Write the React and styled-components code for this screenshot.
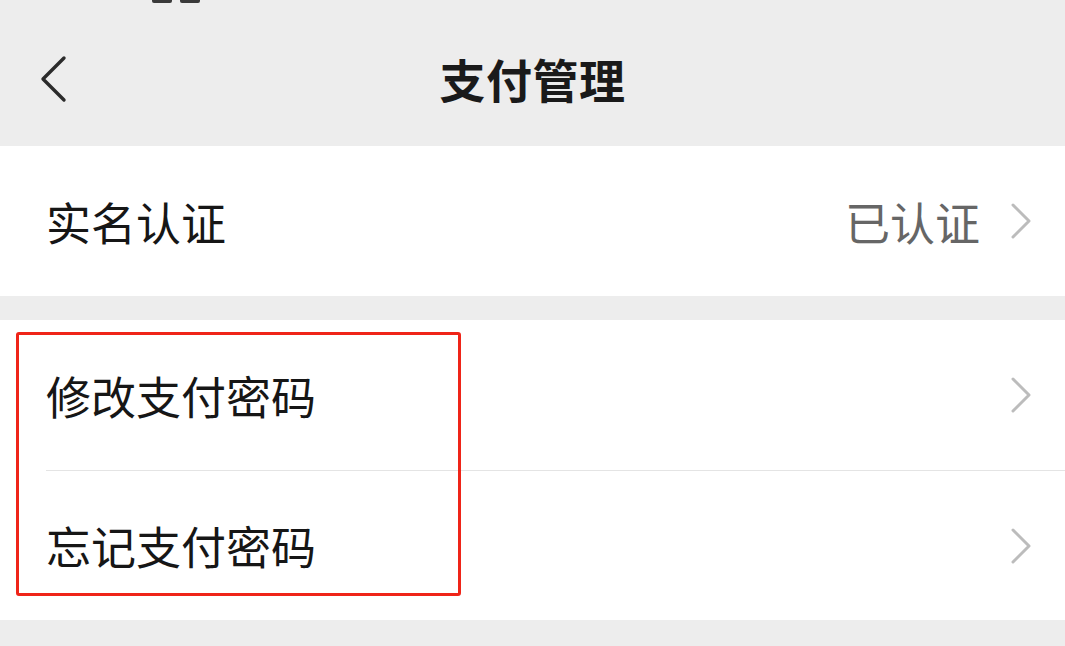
import React from "react";
import styled, { createGlobalStyle } from "styled-components";

const items = [
  { key: "edit", label: "修改支付密码" },
  { key: "forgot", label: "忘记支付密码" },
];

const Chevron = ({ dir = "right" }) =>
  dir === "left" ? (
    <svg width="30" height="48" viewBox="0 0 30 48" fill="none">
      <path d="M26 3 L5 24 L26 45" stroke="#2b2b2b" strokeWidth="3.4" strokeLinecap="round" strokeLinejoin="round" />
    </svg>
  ) : (
    <svg width="22" height="36" viewBox="0 0 22 36" fill="none">
      <path d="M3 2 L19 18 L3 34" stroke="#bcbcbc" strokeWidth="3" strokeLinecap="round" strokeLinejoin="round" />
    </svg>
  );

export default function App() {
  return (
    <>
      <GlobalStyle />
      <Page>
        <StatusSliver>
          <span />
          <span />
        </StatusSliver>
        <NavBar>
          <BackButton>
            <Chevron dir="left" />
          </BackButton>
          <Title>支付管理</Title>
          <NavSpacer />
        </NavBar>

        <Section>
          <Row>
            <Label>实名认证</Label>
            <Right>
              <Value>已认证</Value>
              <Chevron />
            </Right>
          </Row>
        </Section>

        <Section $gap>
          {items.map(({ key, label }, i) => (
            <Row key={key} $divider={i > 0}>
              <Label>{label}</Label>
              <Right>
                <Chevron />
              </Right>
            </Row>
          ))}
          <Highlight />
        </Section>
      </Page>
    </>
  );
}

const GlobalStyle = createGlobalStyle`
  html, body {
    margin: 0;
    padding: 0;
    background: #ededed;
  }
  body {
    font-family: "Noto Sans CJK SC", "Noto Sans", sans-serif;
    color: #1c1c1c;
  }
`;

const Page = styled.div`
  width: 1065px;
  height: 646px;
  overflow: hidden;
  background: #ededed;
  display: flex;
  flex-direction: column;
`;

const StatusSliver = styled.div`
  height: 3px;
  display: flex;
  gap: 8px;
  padding-left: 152px;

  & span {
    width: 20px;
    height: 3px;
    background: #3a3a3a;
    border-radius: 0 0 2px 2px;
  }
`;

const NavBar = styled.div`
  height: 143px;
  display: flex;
  align-items: center;
  justify-content: space-between;
  padding: 12px 0 0 38px;
  box-sizing: border-box;
`;

const BackButton = styled.div`
  width: 30px;
  display: flex;
  align-items: center;
  margin-top: -4px;
`;

const Title = styled.div`
  font-size: 46px;
  font-weight: 700;
  line-height: 1;
  color: #1a1a1a;
  letter-spacing: 0.5px;
  margin-top: -6px;
`;

const NavSpacer = styled.div`
  width: 68px;
`;

const Section = styled.div`
  position: relative;
  background: #ffffff;
  margin-top: ${({ $gap }) => ($gap ? "24px" : "0")};
  padding-left: 46px;
`;

const Row = styled.div`
  height: 150px;
  display: flex;
  align-items: center;
  justify-content: space-between;
  padding-right: 33px;
  box-sizing: border-box;
  border-top: ${({ $divider }) => ($divider ? "1.5px solid #e4e4e4" : "none")};
`;

const Label = styled.div`
  font-size: 45px;
  font-weight: 400;
  line-height: 1;
  color: #161616;
`;

const Right = styled.div`
  display: flex;
  align-items: center;
  gap: 30px;
`;

const Value = styled.div`
  font-size: 45px;
  font-weight: 400;
  line-height: 1;
  color: #666666;
`;

const Highlight = styled.div`
  position: absolute;
  left: 16px;
  top: 12px;
  width: 445px;
  height: 264px;
  border: 3px solid #ef2418;
  border-radius: 3px;
  box-sizing: border-box;
  pointer-events: none;
`;
